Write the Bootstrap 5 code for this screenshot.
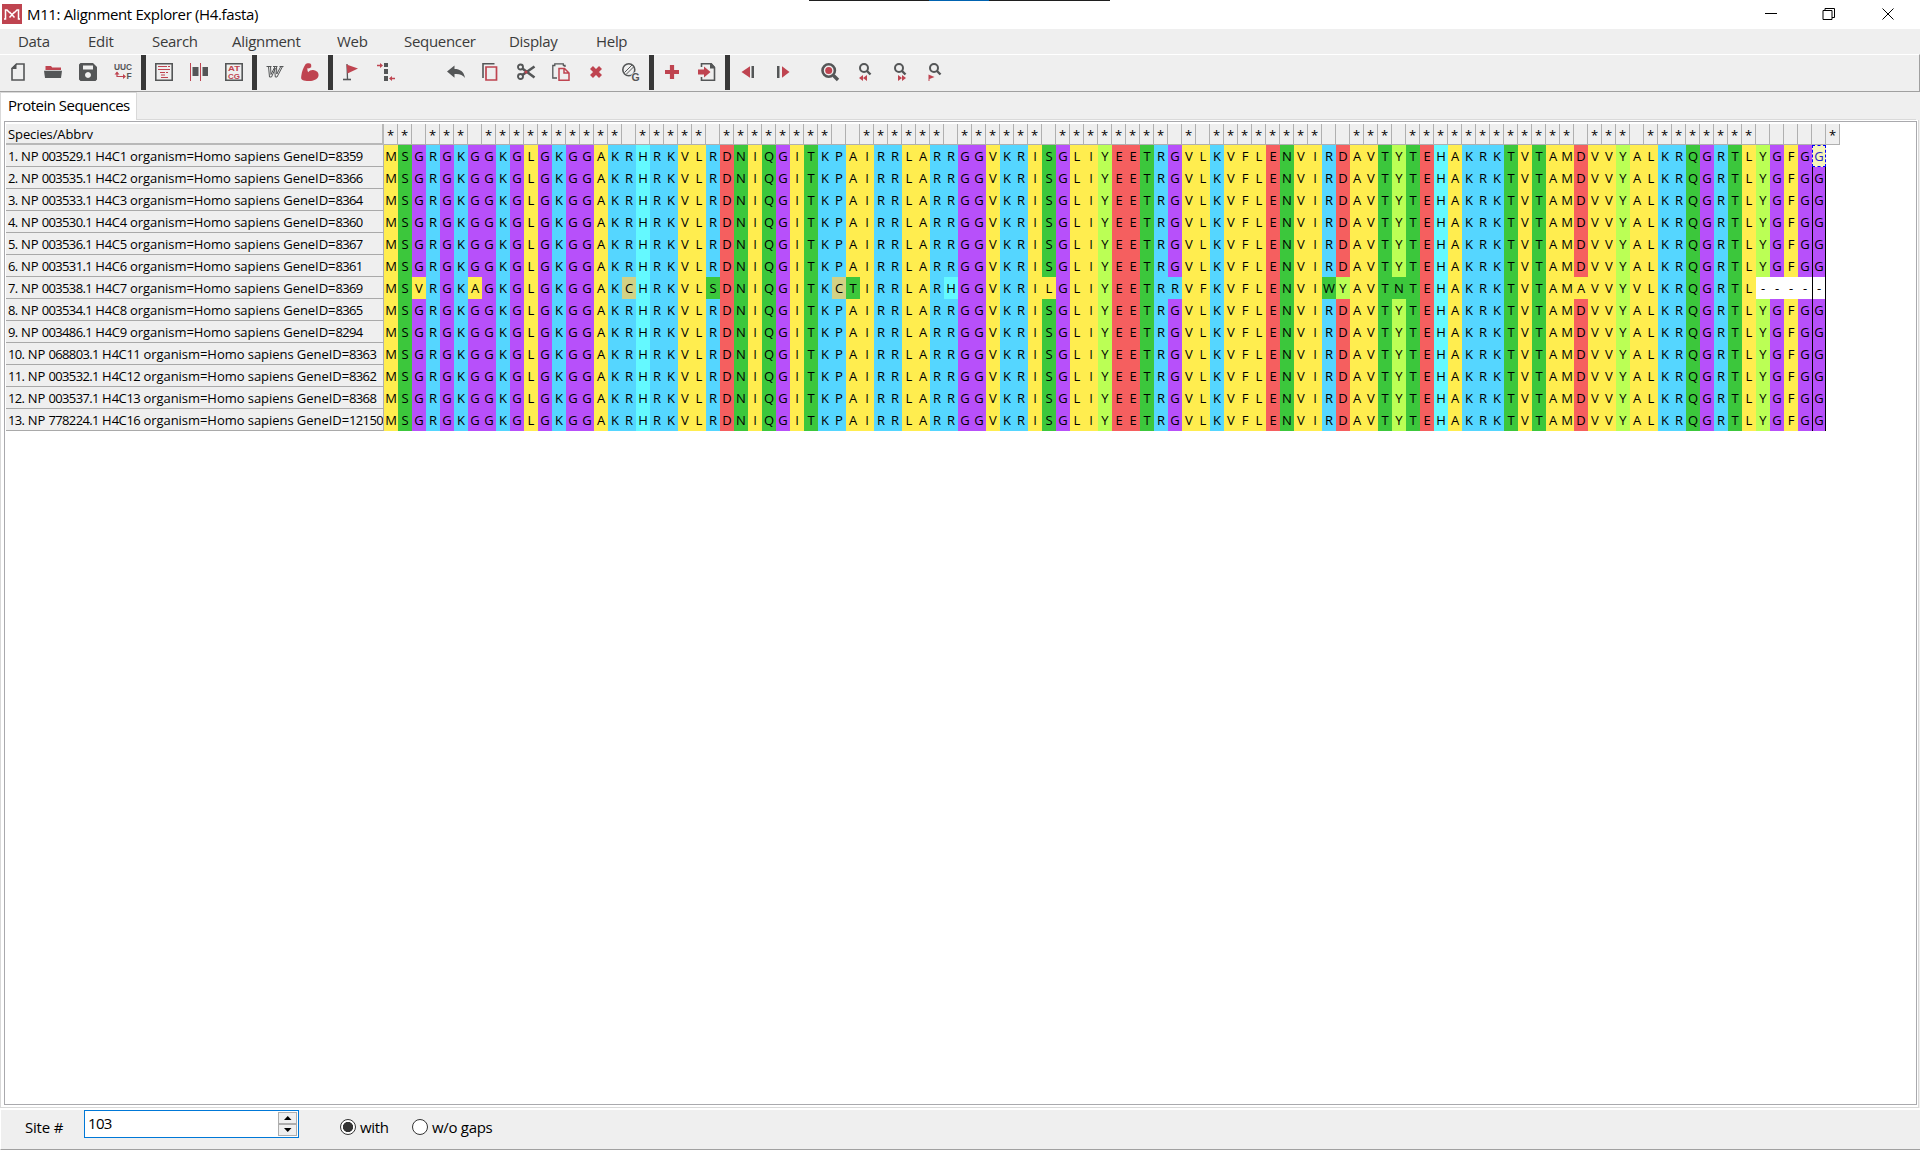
<!DOCTYPE html>
<html lang="en">
<head>
<meta charset="utf-8">
<title>M11: Alignment Explorer (H4.fasta)</title>
<link href="https://cdn.jsdelivr.net/npm/bootstrap@5.3.0/dist/css/bootstrap.min.css" rel="stylesheet">
<style>
:root{--g:#545657;--r:#bf4450;--face:#efefef}
html,body{height:100%}
body{font-family:"Open Sans","Noto Sans",sans-serif;font-size:15px;line-height:20px;letter-spacing:-.3px;color:#000;background:var(--face);overflow:hidden}
.app{height:1150px;width:1920px}
.titlebar{height:29px;background:#fff;position:relative;padding-left:2px}
.edge-strip{position:absolute;top:0;left:809px;width:301px;height:1px;background:linear-gradient(90deg,#1f1f1f 120px,#0063b1 120px 180px,#1f1f1f 180px)}
.titlebar .caption{padding-left:5px;line-height:28px;letter-spacing:-.35px}
.winbtns svg{width:58.5px;height:29px;fill:none;stroke:#000}
.menubar{height:25px;background:var(--face);padding-left:18px}
.menubar .nav-link{padding:0;color:#3b3b3b;line-height:24px;font-size:15px}
.toolbar{height:38px;border-top:1px solid #fff;border-bottom:1px solid #a0a0a0;border-right:1px solid #a0a0a0;background:var(--face)}
.tool{width:35px;height:18px;margin-top:8px;padding:0 0 0 9px;border:0;background:none;line-height:0;flex:none}
.tool svg{width:18px;height:18px;display:block;overflow:visible}
.tool text{font-family:"Liberation Sans",sans-serif;font-weight:bold;letter-spacing:0}
.bar{width:5px;margin:0 0 0 1px;height:35px;background:#383838;flex:none}
.gf{fill:var(--g)}.rf{fill:var(--r)}
.gs{stroke:var(--g);fill:none;stroke-width:1.6}.rs{stroke:var(--r);fill:none;stroke-width:1.2}
.tabrow{height:28px}
.tab-active{width:137px;background:#fff;border:1px solid #d9d9d9;border-bottom:0;border-left-width:1px;padding-left:7px;line-height:25px;letter-spacing:-.5px;white-space:nowrap}
.tabrest{border-bottom:1px solid #d9d9d9}
.page{background:#fff;border:1px solid #d9d9d9;border-top:0;border-left:1px solid #d9d9d9;margin-right:1px;padding:1px 1px 2px 3px;height:988px}
.gridbox{border:1px solid #a9a9ad;background:#fff;height:984px;padding:2px 0 0 1px;font-size:13px;line-height:20px;letter-spacing:0}
.labels{width:378px;flex:none}
.lab{height:22px;background:var(--face);border-right:1px solid #b0b0b0;border-bottom:1px solid #a9a9a9;padding-left:2px;white-space:nowrap;overflow:hidden;letter-spacing:-.05px;line-height:22px}
.lab b{font-weight:400;letter-spacing:-.65px}
.lab.head{height:21px;border-right:2px solid #b8b8b8;border-bottom:2px solid #b8b8b8;line-height:21px;letter-spacing:-.1px}
.star{width:14px;height:21px;background:var(--face);border-right:1px solid #b0b0b0;border-bottom:1px solid #b0b0b0;text-align:center;line-height:22px;font-size:13px;flex:none}
.cel{width:14px;height:22px;text-align:center;line-height:23px;flex:none}
.matrix{position:relative}
.colmark{position:absolute;left:1428px;top:0;width:14px;height:286px;border-left:1px solid #000;border-right:1px solid #000;pointer-events:none}
.cursor-cell{background:#f7f5bb!important;color:#2525c8;outline:1px dashed #00f;outline-offset:-1px;position:relative;z-index:1}
.kM,.kV,.kL,.kI,.kA,.kF{background:#ffed4f}.kS,.kN,.kQ,.kT,.kW{background:#3cc73c}.kG{background:#b750fa}.kR,.kK,.kP{background:#55d6ff}.kH{background:#64f9ff}.kD,.kE{background:#f55f5f}.kC{background:#d2d184}.kY{background:#bbff55}
.status{height:42px;border-top:2px solid #fff;border-bottom:1px solid #a0a0a0;border-left:1px solid #fff;background:var(--face);padding-left:24px}
.site-label{width:59px;line-height:34px;letter-spacing:-.2px;flex:none}
.spin{width:215px;height:28px;border:1px solid #0078d7;background:#fff;flex:none}
.spin input{border:0;outline:0;background:transparent;width:193px;height:24px;padding:0 0 0 3px;font-size:15px;letter-spacing:-.7px;color:#000}
.spin .steps{margin-top:1px}
.spin button{width:19px;height:12px;border:1px solid #adadad;background:#efefef;padding:0;line-height:0;display:block}
.spin svg{width:8px;height:4px;display:block;margin:auto}
.opt{height:33px}
.opt .form-check-input{width:16px;height:16px;margin:0 4px 0 0;border:1px solid #333;background:#fff;box-shadow:none;float:none;flex:none}
.opt .form-check-input:checked{background:radial-gradient(circle,#333 0 4.8px,#fff 5.4px)}
.opt-first{margin-left:41px;width:72px}
</style>
<script src="https://cdn.jsdelivr.net/npm/bootstrap@5.3.0/dist/js/bootstrap.bundle.min.js"></script>
</head>
<body>
<div class="app d-flex flex-column">
  <header class="titlebar d-flex align-items-start">
    <div class="edge-strip"></div>
    <svg class="mt-1" width="20" height="20" viewBox="0 0 20 20"><rect width="20" height="20" fill="#bf4450"/><path d="M2 15h1.500V6H5l3 3M18 15h-1.500V6H15l-3 3M7.500 8l5 5.500M12.500 8l-5 5.500" fill="none" stroke="#fff" stroke-width="1.500"/></svg>
    <span class="caption">M11: Alignment Explorer (H4.fasta)</span>
    <div class="winbtns d-flex ms-auto">
      <svg viewBox="0 0 58.5 29"><path d="M20 13.500h12"/></svg>
      <svg viewBox="0 0 58.5 29"><path d="M20 10.500h9v9h-9zM22 10.500v-2h9.500v9h-2.500"/></svg>
      <svg viewBox="0 0 58.5 29"><path d="M20.500 8.500l11 11M31.500 8.500l-11 11"/></svg>
    </div>
  </header>
  <nav class="menubar nav flex-nowrap" id="menu">
    <a class="nav-link" style="width:70px">Data</a><a class="nav-link" style="width:64px">Edit</a><a class="nav-link" style="width:80px">Search</a><a class="nav-link" style="width:105px">Alignment</a><a class="nav-link" style="width:67px">Web</a><a class="nav-link" style="width:105px">Sequencer</a><a class="nav-link" style="width:87px">Display</a><a class="nav-link">Help</a>
  </nav>
  <div class="toolbar d-flex">
    <button class="tool"><svg viewBox="0 0 18 18"><path class="gs" d="M7.500 1H15v16H3V5.500z"/><path class="gf" d="M2.500 6V5l5-4.500V6z"/></svg></button>
    <button class="tool"><svg viewBox="0 0 18 18"><path class="rf" d="M1.500 3h5.500l1.200 1.500H17V7H1.500z"/><path class="gf" d="M0 7.800h18L17 15H1z"/></svg></button>
    <button class="tool"><svg viewBox="0 0 18 18"><path class="gf" fill-rule="evenodd" d="M1.500 0H14l4 4v12.500L16.500 18h-15L0 16.500v-15zM4 2.500v4h10v-4zM9 9a3 3 0 1 0 .01 0z"/></svg></button>
    <button class="tool"><svg viewBox="0 0 18 18"><text class="gf" x="0" y="7" font-size="8.500" textLength="18" lengthAdjust="spacingAndGlyphs">UUC</text><text class="gf" x="12.500" y="16" font-size="8.500">F</text><path class="rs" d="M3 14V9.500M2.400 13.500h8"/><path class="rf" d="M.500 11.500L3 8.500l2.500 3zM9 11l3 2.500L9 16z"/></svg></button>
    <span class="bar"></span>
    <button class="tool"><svg viewBox="0 0 18 18"><path class="gs" d="M.800.800h16.400v16.400H.800z"/><path class="rs" d="M3 3.500h9M13 3.500h2M3 6.500h12M5 9.500h5M11 9.500h2M6 12h4M6 14.500h7" style="stroke-width:1"/></svg></button>
    <button class="tool"><svg viewBox="0 0 18 18"><path class="gf" d="M2.500 4h6v9h-6zM12.500 4H18v9h-5.500z"/><path class="rs" d="M.500 0v18M10.500 0v18" style="stroke-width:1"/></svg></button>
    <button class="tool"><svg viewBox="0 0 18 18"><path class="gs" d="M.800.800h16.400v16.400H.800z"/><text class="rf" x="3" y="8.300" font-size="7.500" textLength="12" lengthAdjust="spacingAndGlyphs">AT</text><text class="rf" x="3" y="15.600" font-size="7.500" textLength="12" lengthAdjust="spacingAndGlyphs">CG</text></svg></button>
    <span class="bar"></span>
    <button class="tool"><svg viewBox="0 0 18 18"><path d="M.500 3.500h5M7 3.500h4.500M13.500 3.500h4M2.500 3.500l1 10.500h2l4-9M8.500 3.500l.8 10.500h1.700l5.500-10.500M4.500 3.500l.5 8 4-8M10.500 3.500l.3 7.500 4-7.500" class="gs" style="stroke-width:1"/></svg></button>
    <button class="tool"><svg viewBox="0 0 18 18"><path class="rf" d="M4.500 1.200C5.500.200 7 0 8 .200c1.400.200 2.200.800 2.200 1.800v2.200L7.800 5.500 6.600 5C6.100 6.500 6.500 8 7.200 9.300 8.500 7.500 10.500 6.800 13 7.200c3 .500 5 2.600 4.500 5.600-.4 2.800-3.500 4.800-7.500 5.100-3 .2-6.500.1-8.500-.9C0 16.300 0 15 .3 12.800.8 8.500 2.500 4 4.500 1.200z"/></svg></button>
    <span class="bar"></span>
    <button class="tool"><svg viewBox="0 0 18 18"><path class="gs" d="M5 1l.500 15.500" style="stroke-width:1.300"/><path class="gs" d="M1 16.500h8"/><path class="rf" d="M4.500 1.500L16 5.500 5.500 10.500z"/></svg></button>
    <button class="tool"><svg viewBox="0 0 18 18"><path class="gf" d="M7 0h4v4H7zM7 6h4v5H7zM7 13h4v5H7z"/><path class="rs" d="M0 2.500h4M13.500 15.500H18" style="stroke-width:1.300"/><path class="rf" d="M3 0l3 2.500L3 5zM15 13l-3 2.500 3 2.500z"/></svg></button>
    <span style="width:35px"></span>
    <button class="tool"><svg viewBox="0 0 18 18"><path class="gf" d="M0 8.500L7.500 2.500V6C13 6 17 8.500 18 15c-2.200-3.400-5.500-4.300-10.500-4v3.800z"/></svg></button>
    <button class="tool"><svg viewBox="0 0 18 18"><path class="gs" d="M1 15V.800h11.500"/><path class="rs" d="M4 4h10.500v13H4z" style="stroke-width:1.700"/></svg></button>
    <button class="tool"><svg viewBox="0 0 18 18"><circle class="gs" cx="3.500" cy="4" r="2.500" style="stroke-width:1.900"/><circle class="gs" cx="3.500" cy="13.500" r="2.500" style="stroke-width:1.900"/><path class="gs" d="M5 5.300L17.500 14.500M5 12.300L17.500 3.500" style="stroke-width:2.600"/><circle class="rf" cx="9" cy="9" r="1.500"/></svg></button>
    <button class="tool"><svg viewBox="0 0 18 18"><path class="gs" d="M5 15H.800V2.500h2V.800h8.500v2M13 4V2.500h-2" style="stroke-width:1.300"/><path class="rs" d="M7 5.500h5.500L17 10v7.200H7zM12 5.500V10h5" style="stroke-width:1.500"/></svg></button>
    <button class="tool"><svg viewBox="0 0 18 18"><path d="M4.500 4.500l9 9M13.500 4.500l-9 9" stroke="#bf4450" stroke-width="4.200"/></svg></button>
    <button class="tool"><svg viewBox="0 0 18 18"><circle class="gs" cx="6.800" cy="6.800" r="6"/><path class="gs" d="M2.500 9.500L10 2M4 11.500L11.500 4" style="stroke-width:1"/><text class="gf" x="9.500" y="17.500" font-size="10.500" stroke="#efefef" stroke-width="1.500" paint-order="stroke">G</text></svg></button>
    <span class="bar"></span>
    <button class="tool"><svg viewBox="0 0 18 18"><path d="M9 2v14M2 9h14" stroke="#bf4450" stroke-width="4.200"/></svg></button>
    <button class="tool"><svg viewBox="0 0 18 18"><path class="gs" d="M3.500 4V.800h9.500L16.500 4.500v12.700h-13V14"/><path class="gf" d="M12 0h1.500L17 4v1.500h-5z"/><path class="rf" d="M0 6.500h6v-3l6.500 5.500L6 14.500v-3H0z"/></svg></button>
    <span class="bar"></span>
    <button class="tool"><svg viewBox="0 0 18 18"><path class="rf" d="M2.500 9L11 3.200v11.600z"/><path class="gf" d="M12.500 3H15v12h-2.500z"/></svg></button>
    <button class="tool"><svg viewBox="0 0 18 18"><path class="rf" d="M15.500 9L8 3.200v11.600z"/><path class="gf" d="M3 3h2.500v12H3z"/></svg></button>
    <span style="width:12px"></span>
    <button class="tool"><svg viewBox="0 0 18 18"><circle class="gs" cx="7.700" cy="7.500" r="6.200" style="stroke-width:2.600"/><circle class="rf" cx="7.700" cy="7.500" r="3.500"/><path class="gs" d="M12.500 12.500l4.500 4.500" style="stroke-width:3.400"/></svg></button>
    <button class="tool"><svg viewBox="0 0 18 18"><circle class="gs" cx="8" cy="5" r="4" style="stroke-width:2"/><path class="gs" d="M11 8l3.500 3.500" style="stroke-width:2.400"/><path class="rf" d="M3 15l4-3v6zM7 15l4-3v6z"/></svg></button>
    <button class="tool"><svg viewBox="0 0 18 18"><circle class="gs" cx="8" cy="5" r="4" style="stroke-width:2"/><path class="gs" d="M11 8l3.500 3.500" style="stroke-width:2.400"/><path class="rf" d="M11 15l-4-3v6zM15 15l-4-3v6z"/></svg></button>
    <button class="tool"><svg viewBox="0 0 18 18"><circle class="gs" cx="8" cy="5" r="4" style="stroke-width:2"/><path class="gs" d="M11 8l3.500 3.500" style="stroke-width:2.400"/><path class="rf" d="M2.500 11.500l6 2.500-5 2v2h-1z"/></svg></button>
  </div>
  <div class="tabrow d-flex">
    <div class="tab-active">Protein Sequences</div><div class="tabrest flex-grow-1 me-1"></div>
  </div>
  <main class="page">
    <div class="gridbox d-flex">
      <div class="labels" id="labels"><div class="lab head">Species/Abbrv</div></div>
      <div>
        <div class="d-flex" id="stars"></div>
        <div class="matrix" id="matrix"><div class="colmark"></div></div>
      </div>
    </div>
  </main>
  <footer class="status d-flex">
    <label class="site-label" for="site">Site #</label>
    <div class="spin d-flex">
      <input id="site" type="text" value="103">
      <div class="steps"><button aria-label="Up"><svg viewBox="0 0 8 4"><path d="M0 4h7.500L3.750 0z"/></svg></button><button aria-label="Down"><svg viewBox="0 0 8 4"><path d="M0 0h7.500L3.750 4z"/></svg></button></div>
    </div>
    <label class="opt opt-first d-flex align-items-center"><input class="form-check-input" type="radio" name="gaps" checked>with</label>
    <label class="opt d-flex align-items-center"><input class="form-check-input" type="radio" name="gaps">w/o gaps</label>
  </footer>
</div>
<script>
const base='MSGRGKGGKGLGKGGAKRHRKVLRDNIQGITKPAIRRLARRGGVKRISGLIYEETRGVLKVFLENVIRDAVTYTEHAKRKTVTAMDVVYALKRQGRTLYGFGG';
const c7='MSVRGKAGKGLGKGGAKCHRKVLSDNIQGITKCTIRRLARHGGVKRILGLIYEETRRVFKVFLENVIWYAVTNTEHAKRKTVTAMAVVYVLKRQGRTL-----';
const genes=[['003529.1','H4C1','8359'],['003535.1','H4C2','8366'],['003533.1','H4C3','8364'],['003530.1','H4C4','8360'],['003536.1','H4C5','8367'],['003531.1','H4C6','8361'],['003538.1','H4C7','8369'],['003534.1','H4C8','8365'],['003486.1','H4C9','8294'],['068803.1','H4C11','8363'],['003532.1','H4C12','8362'],['003537.1','H4C13','8368'],['778224.1','H4C16','12150']];
const labels=document.getElementById('labels'),matrix=document.getElementById('matrix');
let lh='',mh='';
genes.forEach((g,i)=>{
  const name=`${i+1}. NP ${g[0]} ${g[1]} organism=Homo sapiens GeneID=${g[2]}`;
  lh+='<div class="lab">'+name.replace(/[\d.]+/g,'<b>$&</b>')+'</div>';
  mh+='<div class="d-flex">'+[...(i===6?c7:base)].map((r,k)=>`<div class="cel${r==='-'?'':' k'+r}${i===0&&k===102?' cursor-cell':''}">${r}</div>`).join('')+'</div>';
});
labels.insertAdjacentHTML('beforeend',lh);
matrix.insertAdjacentHTML('afterbegin',mh);
// a star marks each conserved column; the trailing column is empty and counts as conserved
document.getElementById('stars').innerHTML=[...base+' '].map((r,k)=>`<div class="star">${k===103||r===c7[k]?'*':''}</div>`).join('');
</script>
</body>
</html>
